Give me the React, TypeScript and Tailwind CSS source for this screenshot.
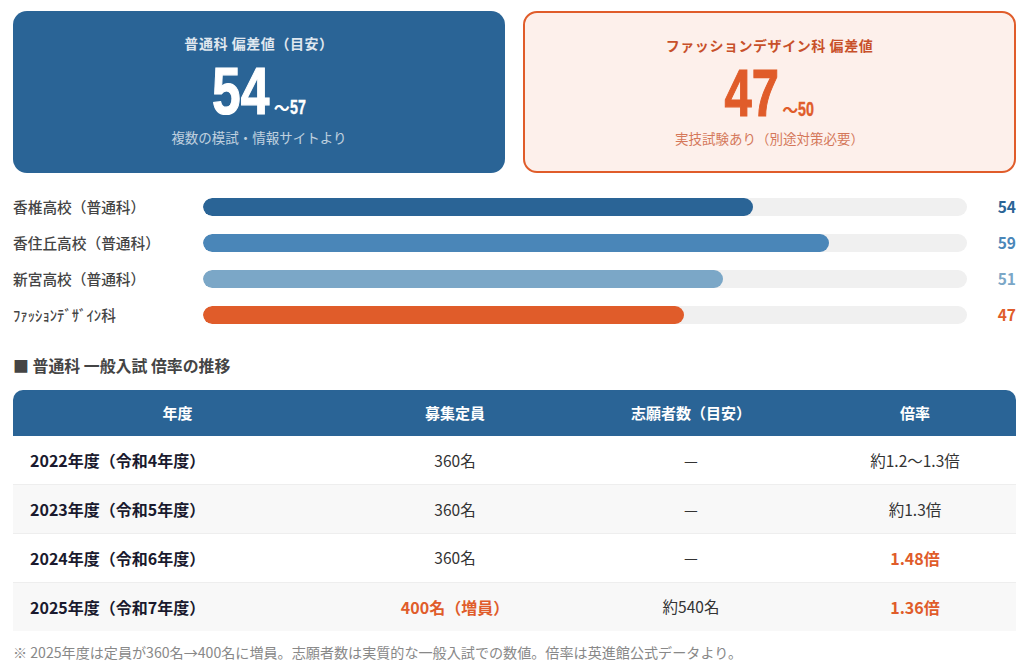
const jp = { fontFamily: '"Noto Sans CJK JP", "Noto Sans", sans-serif' };
const narrow = { fontFamily: '"Liberation Sans", sans-serif' };

const bars = [
  { label: "香椎高校（普通科）", value: 54, pct: "w-[72%]", bar: "bg-[#2a6496]", text: "text-[#2a6496]" },
  { label: "香住丘高校（普通科）", value: 59, pct: "w-[82%]", bar: "bg-[#4a86b8]", text: "text-[#4a86b8]" },
  { label: "新宮高校（普通科）", value: 51, pct: "w-[68%]", bar: "bg-[#7ba7c7]", text: "text-[#7ba7c7]" },
  { label: "ﾌｧｯｼｮﾝﾃﾞｻﾞｲﾝ科", value: 47, pct: "w-[63%]", bar: "bg-[#e05c2a]", text: "text-[#e05c2a]" },
];

const rows = [
  { year: "2022年度（令和4年度）", cap: "360名", apps: "—", rate: "約1.2〜1.3倍" },
  { year: "2023年度（令和5年度）", cap: "360名", apps: "—", rate: "約1.3倍" },
  { year: "2024年度（令和6年度）", cap: "360名", apps: "—", rate: "1.48倍", hot: true },
  { year: "2025年度（令和7年度）", cap: "400名（増員）", apps: "約540名", rate: "1.36倍", hot: true, capHot: true },
];

function BigNum({ main, sub, mainClass }: { main: string; sub: string; mainClass: string }) {
  return (
    <div className="flex items-baseline justify-center h-[62px] mt-[7px]">
      <span className={`text-[66px] font-bold leading-[62px] inline-block [-webkit-text-stroke:1.2px_currentColor] ${mainClass}`} style={narrow}>{main}</span>
      <span className="text-[16px] font-bold ml-[4px]">〜</span>
      <span className="text-[21px] font-bold inline-block w-[16px] origin-left scale-x-[0.68] [-webkit-text-stroke:0.4px_currentColor]" style={narrow}>{sub}</span>
    </div>
  );
}

export default function App() {
  return (
    <div className="pl-[13px] pr-[8px] pt-[11px] bg-white h-[672px] overflow-hidden text-[#333]" style={jp}>
      <div className="grid grid-cols-[492px_1fr] gap-[18px]">
        <div className="h-[162px] rounded-[14px] bg-[#2a6496] text-white text-center pt-[22px]">
          <p className="text-[14px] font-bold tracking-[0.04em] leading-[20px] opacity-85">普通科 偏差値（目安）</p>
          <BigNum main="54" sub="57" mainClass="scale-x-[0.78] -mx-[8px]" />
          <p className="text-[13.5px] leading-[20px] opacity-70 mt-[5px]">複数の模試・情報サイトより</p>
        </div>
        <div className="h-[162px] rounded-[14px] bg-[#fdf0eb] border-2 border-[#e05c2a] text-[#e05c2a] text-center pt-[22px]">
          <p className="text-[14px] font-bold tracking-[0.04em] leading-[20px] mb-[1px] text-[#c8502a]">ファッションデザイン科 偏差値</p>
          <BigNum main="47" sub="50" mainClass="scale-x-[0.74] -mx-[10px]" />
          <p className="text-[13.5px] leading-[20px] opacity-75 mt-[4px] text-[#c8502a]">実技試験あり（別途対策必要）</p>
        </div>
      </div>

      <div className="mt-[25px] flex flex-col gap-[18px]">
        {bars.map((b) => (
          <div key={b.label} className="flex items-center h-[18px]">
            <span className="w-[190px] shrink-0 text-[14.7px] font-medium text-[#444]">{b.label}</span>
            <div className="flex-1 h-[18px] rounded-full bg-[#f0f0f0] overflow-hidden">
              <div className={`h-full rounded-full ${b.pct} ${b.bar}`} />
            </div>
            <span className={`w-[49px] shrink-0 text-right text-[15.5px] font-bold ${b.text}`}>{b.value}</span>
          </div>
        ))}
      </div>

      <h3 className="mt-[32px] text-[15.9px] font-bold leading-[20px] text-[#444]">■ 普通科 一般入試 倍率の推移</h3>

      <div className="mt-[14px] rounded-t-[10px] overflow-hidden">
        <table className="w-full border-collapse table-fixed text-[15.5px]">
          <colgroup>
            <col className="w-[329px]" />
            <col className="w-[226px]" />
            <col className="w-[246px]" />
            <col className="w-[202px]" />
          </colgroup>
          <thead>
            <tr className="bg-[#2a6496] text-white h-[46px]">
              <th className="font-bold text-[15px]">年度</th>
              <th className="font-bold text-[15px]">募集定員</th>
              <th className="font-bold text-[15px]">志願者数（目安）</th>
              <th className="font-bold text-[15px]">倍率</th>
            </tr>
          </thead>
          <tbody>
            {rows.map((r, i) => (
              <tr key={r.year} className={`h-[48.75px] ${i % 2 === 1 ? "bg-[#f8f8f8]" : "bg-white"} ${i < 3 ? "border-b border-[#eeeeee]" : ""}`}>
                <td className="pl-[17px] font-bold text-[16px] text-[#1a1a2e]">{r.year}</td>
                <td className={`text-center ${r.capHot ? "font-bold text-[16px] text-[#e05c2a]" : ""}`}>{r.cap}</td>
                <td className="text-center">{r.apps}</td>
                <td className={`text-center ${r.hot ? "font-bold text-[16px] text-[#e05c2a]" : ""}`}>{r.rate}</td>
              </tr>
            ))}
          </tbody>
        </table>
      </div>

      <p className="mt-[12px] text-[14.1px] leading-[18px] text-[#888]">※ 2025年度は定員が360名→400名に増員。志願者数は実質的な一般入試での数値。倍率は英進館公式データより。</p>
    </div>
  );
}
